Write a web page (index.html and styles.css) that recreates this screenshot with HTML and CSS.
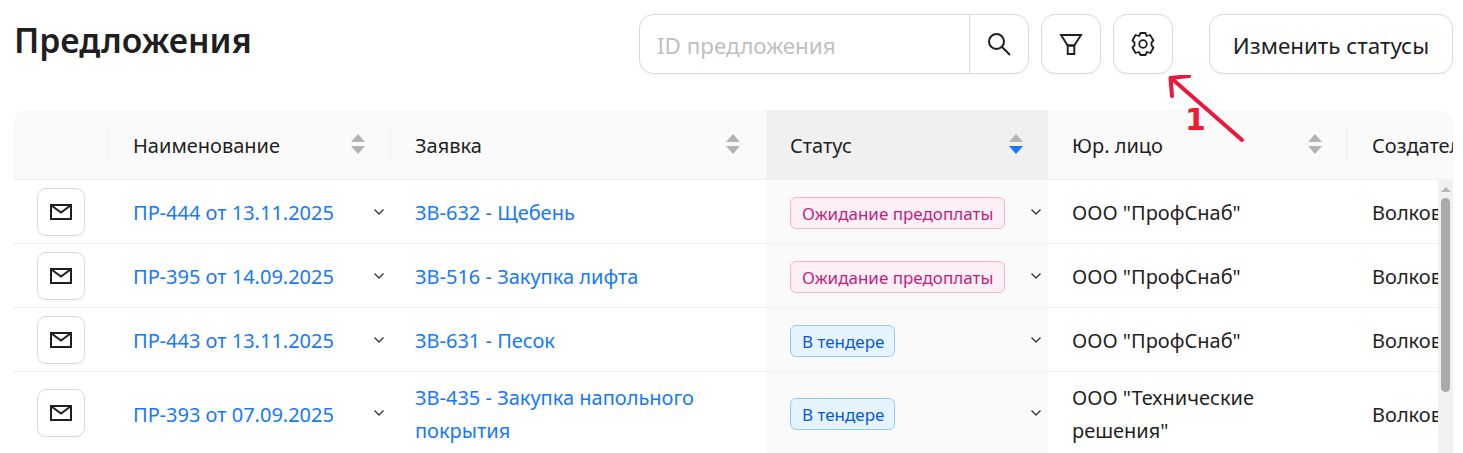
FILE: index.html
```html
<!DOCTYPE html>
<html lang="ru">
<head>
<meta charset="utf-8">
<title>Предложения</title>
<link rel="stylesheet" href="styles.css">
</head>
<body>
<div class="page">
  <header class="top">
    <h1 class="title">Предложения</h1>
    <div class="tools">
      <div class="search">
        <span class="search-input">ID предложения</span>
        <span class="search-btn">
          <svg width="24" height="24" viewBox="0 0 24 24" fill="none" stroke="#1f1f1f" stroke-width="2"><circle cx="9.500" cy="9.500" r="7.500"/><path d="M14.800 14.800 23 23"/></svg>
        </span>
      </div>
      <button class="icon-btn">
        <svg width="24" height="24" viewBox="0 0 24 24" fill="none" stroke="#1f1f1f" stroke-width="1.9"><path d="M2 3h20l-6.700 10.500H8.700z"/><path d="M8.700 13.500h6.600V22H8.700z"/></svg>
      </button>
      <button class="icon-btn">
        <svg width="24" height="24" viewBox="0 0 24 24" fill="none" stroke="#1f1f1f" stroke-width="1.8" stroke-linejoin="round"><path d="M9.500 1h5l1 3 3.500-1 3.500 5.500-2 2v3l2 2-3 5.500-3.500-1-1.500 3h-5L8 20l-3.500 1-3-5.500 2-2v-3l-2-2 3-5.500L8 4z"/><circle cx="12" cy="12" r="3.800"/></svg>
      </button>
      <button class="text-btn">Изменить статусы</button>
    </div>
  </header>

  <section class="table">
    <div class="row head">
      <div class="cell"></div>
      <div class="cell sep">Наименование<span class="sorter"><i class="up"></i><i class="down"></i></span></div>
      <div class="cell sep">Заявка<span class="sorter"><i class="up"></i><i class="down"></i></span></div>
      <div class="cell sorted">Статус<span class="sorter"><i class="up"></i><i class="down active"></i></span></div>
      <div class="cell">Юр. лицо<span class="sorter"><i class="up"></i><i class="down"></i></span></div>
      <div class="cell sep">Создатель</div>
    </div>
    <div class="body">
      <div class="rows">
        <div class="row">
          <div class="cell mailcell"><button class="mail"><svg width="22" height="16" viewBox="0 0 22 16" fill="none" stroke="#1f1f1f" stroke-width="2"><path d="M1 1h20v14H1z"/><path d="M1.500 1.500 11 8.500l9.500-7"/></svg></button></div>
          <div class="cell"><a class="link">ПР-444 от 13.11.2025</a><svg class="chev" width="10" height="6" viewBox="0 0 10 6" fill="none" stroke="#333" stroke-width="1.3"><path d="M.5.5 5 5 9.500.5"/></svg></div>
          <div class="cell"><a class="link">ЗВ-632 - Щебень</a></div>
          <div class="cell sorted"><span class="tag pink">Ожидание предоплаты</span><svg class="chev" width="10" height="6" viewBox="0 0 10 6" fill="none" stroke="#333" stroke-width="1.3"><path d="M.5.5 5 5 9.500.5"/></svg></div>
          <div class="cell">ООО "ПрофСнаб"</div>
          <div class="cell">Волков</div>
        </div>
        <div class="row">
          <div class="cell mailcell"><button class="mail"><svg width="22" height="16" viewBox="0 0 22 16" fill="none" stroke="#1f1f1f" stroke-width="2"><path d="M1 1h20v14H1z"/><path d="M1.500 1.500 11 8.500l9.500-7"/></svg></button></div>
          <div class="cell"><a class="link">ПР-395 от 14.09.2025</a><svg class="chev" width="10" height="6" viewBox="0 0 10 6" fill="none" stroke="#333" stroke-width="1.3"><path d="M.5.5 5 5 9.500.5"/></svg></div>
          <div class="cell"><a class="link">ЗВ-516 - Закупка лифта</a></div>
          <div class="cell sorted"><span class="tag pink">Ожидание предоплаты</span><svg class="chev" width="10" height="6" viewBox="0 0 10 6" fill="none" stroke="#333" stroke-width="1.3"><path d="M.5.5 5 5 9.500.5"/></svg></div>
          <div class="cell">ООО "ПрофСнаб"</div>
          <div class="cell">Волков</div>
        </div>
        <div class="row">
          <div class="cell mailcell"><button class="mail"><svg width="22" height="16" viewBox="0 0 22 16" fill="none" stroke="#1f1f1f" stroke-width="2"><path d="M1 1h20v14H1z"/><path d="M1.500 1.500 11 8.500l9.500-7"/></svg></button></div>
          <div class="cell"><a class="link">ПР-443 от 13.11.2025</a><svg class="chev" width="10" height="6" viewBox="0 0 10 6" fill="none" stroke="#333" stroke-width="1.3"><path d="M.5.5 5 5 9.500.5"/></svg></div>
          <div class="cell"><a class="link">ЗВ-631 - Песок</a></div>
          <div class="cell sorted"><span class="tag blue">В тендере</span><svg class="chev" width="10" height="6" viewBox="0 0 10 6" fill="none" stroke="#333" stroke-width="1.3"><path d="M.5.5 5 5 9.500.5"/></svg></div>
          <div class="cell">ООО "ПрофСнаб"</div>
          <div class="cell">Волков</div>
        </div>
        <div class="row">
          <div class="cell mailcell"><button class="mail"><svg width="22" height="16" viewBox="0 0 22 16" fill="none" stroke="#1f1f1f" stroke-width="2"><path d="M1 1h20v14H1z"/><path d="M1.500 1.500 11 8.500l9.500-7"/></svg></button></div>
          <div class="cell"><a class="link">ПР-393 от 07.09.2025</a><svg class="chev" width="10" height="6" viewBox="0 0 10 6" fill="none" stroke="#333" stroke-width="1.3"><path d="M.5.5 5 5 9.500.5"/></svg></div>
          <div class="cell"><a class="link">ЗВ-435 - Закупка напольного покрытия</a></div>
          <div class="cell sorted"><span class="tag blue">В тендере</span><svg class="chev" width="10" height="6" viewBox="0 0 10 6" fill="none" stroke="#333" stroke-width="1.3"><path d="M.5.5 5 5 9.500.5"/></svg></div>
          <div class="cell">ООО "Технические решения"</div>
          <div class="cell">Волков</div>
        </div>
      </div>
      <div class="scrollbar"><i class="scroll-arrow"></i><i class="scroll-thumb"></i></div>
    </div>
  </section>

  <svg class="arrow" width="90" height="80" viewBox="0 0 90 80" fill="none" stroke="#e8193c" stroke-width="4" stroke-linecap="round" stroke-linejoin="round"><path d="M74 65 3 3"/><path d="M4 21 2.500 3 21 1"/></svg>
  <span class="note">1</span>
</div>
</body>
</html>
```
FILE: styles.css
```css
* { box-sizing: border-box; }
html, body { margin: 0; height: 100%; overflow: hidden; background: #fff; }
body { font-family: "Noto Sans", "Open Sans", sans-serif; font-size: 20px; color: #1f1f1f; }
.page { position: relative; height: 453px; padding: 14px 10px 0 13px; overflow: hidden; }

.top { display: flex; justify-content: space-between; align-items: flex-start; height: 96px; }
.title { margin: 4px 0 0 1px; font-size: 33.7px; line-height: 44px; font-weight: 600; color: #1f1f1f; }
.tools { display: flex; align-items: stretch; height: 60px; }

.search { display: flex; width: 390px; border: 1px solid #d9d9d9; border-radius: 14px; box-shadow: 0 2px 0 rgba(0,0,0,.02); margin-right: 12px; }
.search-input { flex: 1; padding-left: 17px; font-size: 22.4px; color: #bfbfbf; height: 58px; line-height: 62px; }
.search-btn { width: 59px; border-left: 1px solid #d9d9d9; display: flex; align-items: center; justify-content: center; }

.icon-btn, .text-btn, .mail { background: #fff; border: 1px solid #d9d9d9; box-shadow: 0 2px 0 rgba(0,0,0,.02); padding: 0; font: inherit; color: inherit; display: flex; align-items: center; justify-content: center; }
.icon-btn { width: 60px; border-radius: 14px; margin-right: 12px; }
.text-btn { width: 244px; margin-left: 24px; border-radius: 14px; font-size: 22.4px; padding-top: 2px; }

.table { display: flex; flex-direction: column; }
.row { display: grid; grid-template-columns: 96px 282px 375px 282px 299px 1fr; min-height: 64px; border-bottom: 1px solid #f0f0f0; }
.head { width: 1440px; height: 70px; background: #fafafa; border-radius: 14px 14px 0 0; overflow: hidden; }
.cell { position: relative; display: flex; align-items: center; padding: 2px 24px 0; line-height: 33px; min-width: 0; white-space: normal; }
.rows .cell:last-child { padding-right: 0; padding-left: 25px; white-space: nowrap; overflow: hidden; }
.head .cell:last-child { white-space: nowrap; padding-left: 25px; }
.sep::before { content: ""; position: absolute; left: -1px; top: 50%; width: 1px; height: 33px; margin-top: -16px; background: #f0f0f0; }
.head .sorted { background: #f0f0f0; }
.rows .sorted { background: #fafafa; }

.sorter { position: absolute; right: 25px; top: 50%; margin-top: -11px; display: flex; flex-direction: column; gap: 4px; }
.sep .sorter { right: 26px; }
.up, .down { display: block; width: 0; height: 0; border-left: 7px solid transparent; border-right: 7px solid transparent; }
.up { border-bottom: 8px solid #b3b3b3; }
.down { border-top: 8px solid #b3b3b3; }
.down.active { border-top-color: #1677ff; }

.body { display: flex; height: 273px; overflow: hidden; width: 1440px; }
.rows { width: 1425px; overflow: hidden; flex: none; }
.rows .row { grid-template-columns: 96px 282px 375px 282px 299px 91px; }
.rows .row:last-child { min-height: 82px; border-bottom: 0; }

.mailcell { justify-content: center; padding: 0; }
.mail { width: 48px; height: 48px; border-radius: 9px; }
.link { color: #1677ff; }
.chev { position: absolute; right: 7px; top: 50%; margin-top: -3px; }

.tag { display: inline-block; padding: 0 11px; height: 32px; line-height: 32px; font-size: 17px; border-radius: 6px; border: 1px solid; white-space: nowrap; }
.pink { color: #c41d7f; background: #fff0f6; border-color: #ffadd2; }
.blue { color: #0958d9; background: #e6f4ff; border-color: #91caff; padding: 0 10px 0 11px; }

.scrollbar { position: relative; flex: none; width: 15px; background: #f1f1f1; }
.scroll-arrow { position: absolute; left: 3px; top: 7px; width: 0; height: 0; border-left: 5px solid transparent; border-right: 5px solid transparent; border-bottom: 5px solid #b8b8b8; }
.scroll-thumb { position: absolute; left: 3px; top: 18px; width: 9px; height: 194px; background: #aaa; border-radius: 5px; }

.arrow { position: absolute; left: 1168px; top: 75px; }
.note { position: absolute; left: 1185px; top: 100px; color: #ee1c2e; font-size: 30px; font-weight: 700; line-height: 40px; font-family: "DejaVu Sans", sans-serif; }
```
